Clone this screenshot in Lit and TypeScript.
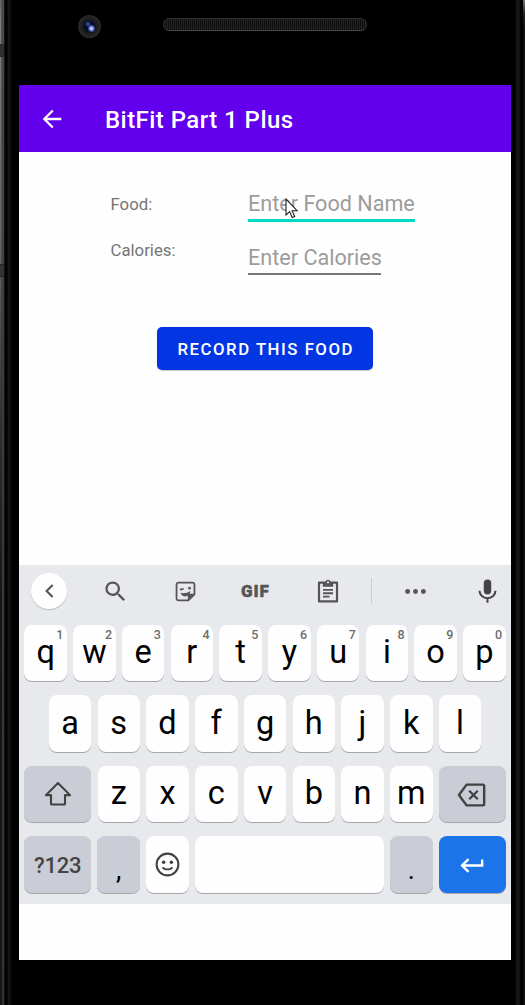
import { LitElement, html, css, svg, nothing } from "lit";
import { customElement, property } from "lit/decorators.js";

const icons = {
  back: svg`<path fill="currentColor" d="M20 11H7.8l5.6-5.6L12 4l-8 8 8 8 1.4-1.4L7.8 13H20z"/>`,
  chevron: svg`<path fill="none" stroke="currentColor" stroke-width="2" d="M15 5.700L9.200 11.500l5.800 5.800"/>`,
  search: svg`<path fill="currentColor" d="M15.5 14h-.79l-.28-.27A6.47 6.47 0 0 0 16 9.5 6.5 6.5 0 1 0 9.5 16c1.61 0 3.09-.59 4.23-1.57l.27.28v.79l5 4.99L20.49 19zm-6 0a4.5 4.5 0 1 1 0-9 4.5 4.5 0 0 1 0 9z"/>`,
  sticker: svg`<path fill="none" stroke="currentColor" stroke-width="1.700" stroke-linejoin="round" d="M5.200 3.400h13.600a1.800 1.800 0 0 1 1.800 1.800v9.600l-5.800 5.800H5.200a1.800 1.800 0 0 1-1.800-1.800V5.200a1.800 1.800 0 0 1 1.800-1.800z"/><path fill="currentColor" d="M20.800 14.200l-6.600 6.600v-4.400a2.200 2.200 0 0 1 2.200-2.200z"/><circle cx="15.900" cy="8.800" r="1.300" fill="currentColor"/><path fill="none" stroke="currentColor" stroke-width="1.700" d="M6.700 10.200l3.400-.8"/><path fill="currentColor" d="M7.200 13.200c3.200.9 6.400.3 9.500-1.700-.2 3.400-2.400 5.200-4.900 5.200-2.200 0-3.900-1.300-4.600-3.500z"/>`,
  clipboard: svg`<path fill="none" stroke="currentColor" stroke-width="2" stroke-linejoin="round" d="M3.700 4.200h16.600v17.400H3.700z"/><path fill="currentColor" d="M7.200 3.600h2.200a2.700 2.700 0 0 1 5.200 0h2.200v4.400H7.200z"/><circle cx="12" cy="4" r="1" fill="#e8e9ed"/><path stroke="currentColor" stroke-width="1.700" d="M7.400 11h9.200M7.400 14.100h9.200M7.400 17.200h6"/>`,
  more: svg`<circle cx="5" cy="12" r="2.200" fill="currentColor"/><circle cx="12" cy="12" r="2.200" fill="currentColor"/><circle cx="19" cy="12" r="2.200" fill="currentColor"/>`,
  mic: svg`<rect x="8.700" y="1.300" width="6.600" height="13.300" rx="3.300" fill="currentColor"/><path fill="none" stroke="currentColor" stroke-width="1.800" d="M4.900 11.300a7.100 6.600 0 0 0 14.200 0M12 18v4"/>`,
  shift: svg`<path fill="none" stroke="currentColor" stroke-width="1.700" stroke-linejoin="round" d="M12 3.200L2.400 12.900h4v6.800a.7.7 0 0 0 .7.700h9.800a.7.700 0 0 0 .7-.7v-6.800h4z"/>`,
  erase: svg`<path fill="none" stroke="currentColor" stroke-width="1.800" stroke-linejoin="round" d="M8.300 4.200h12.200a1 1 0 0 1 1 1v13.600a1 1 0 0 1-1 1H8.300L2.600 12z"/><path fill="none" stroke="currentColor" stroke-width="1.700" d="M10.300 8.800l6.400 6.400M16.700 8.800l-6.400 6.400"/>`,
  smile: svg`<circle cx="12" cy="12" r="9" fill="none" stroke="currentColor" stroke-width="1.700"/><circle cx="8.800" cy="10.100" r="1.450" fill="currentColor"/><circle cx="15.200" cy="10.100" r="1.450" fill="currentColor"/><path fill="none" stroke="currentColor" stroke-width="1.500" d="M8 14.200c1.600 2.500 6.400 2.500 8 0"/>`,
  enter: svg`<path fill="currentColor" d="M19 7v4H5.830l3.580-3.590L8 6l-6 6 6 6 1.410-1.410L5.830 13H21V7z"/>`,
};
type IconName = keyof typeof icons;

@customElement("ui-icon")
class UiIcon extends LitElement {
  @property() name: IconName = "back";
  static styles = css`
    :host { display: block; width: 27px; height: 27px; flex: none; }
    svg { display: block; width: 100%; height: 100%; }
  `;
  render() {
    return html`<svg viewBox="0 0 24 24">${icons[this.name]}</svg>`;
  }
}

@customElement("key-cap")
class KeyCap extends LitElement {
  @property() label = "";
  @property() hint = "";
  @property() icon = "";
  static styles = css`
    :host {
      display: flex; align-items: center; justify-content: center;
      position: relative; box-sizing: border-box; width: 42.500px; height: 56.500px; flex: none;
      border-radius: 8px; background: #fefefe; color: #000;
      box-shadow: 0 1px 0.500px #a5a7ab; font-size: 32.500px; line-height: 56px;
    }
    :host(.wide) { width: 66.875px; }
    :host(.grey) { background: #cacdd5; }
    :host(.space) { flex: 1; }
    :host(.go) { background: #1b74e8; color: #fff; }
    :host(.mode) { font-size: 22px; font-weight: 500; color: #444; }
    :host(.dim) { color: #424242; }
    .label { margin-top: -1px; }
    :host(.mode) .label { margin-top: 2.500px; letter-spacing: -0.200px; }
    :host(.punct) { font-size: 27px; }
    :host(.punct) .label { margin-top: 12px; }
    .hint {
      position: absolute; top: 2px; right: 3.500px;
      font-size: 12.500px; line-height: 16px; font-weight: 500; color: #6c6c6c;
    }
    ui-icon { width: 29px; height: 29px; }
    .shift { width: 30px; height: 30px; margin-top: 1px; }
    .erase { width: 33px; height: 32px; margin: 2px 2px 0 0; }
    .smile { margin-top: 1px; }
    .enter { margin-top: 2px; }
  `;
  render() {
    return html`
      ${this.icon ? html`<ui-icon class=${this.icon} name=${this.icon}></ui-icon>` : nothing}
      ${this.label ? html`<span class="label">${this.label}</span>` : nothing}
      ${this.hint ? html`<span class="hint">${this.hint}</span>` : nothing}
    `;
  }
}

@customElement("soft-keyboard")
class SoftKeyboard extends LitElement {
  static styles = css`
    :host { display: block; height: 339px; background: #e8e9ed; }
    .tools { display: flex; align-items: center; height: 52px; padding-left: 12px; color: #555; }
    .collapse {
      display: flex; align-items: center; justify-content: center;
      width: 36px; height: 36px; border-radius: 50%; background: #fefefe;
      box-shadow: 0 1px 1px #b9babd;
    }
    .collapse ui-icon { width: 25px; height: 25px; }
    .search { margin-left: 35px; }
    .sticker { width: 25px; height: 25px; margin-left: 43.500px; }
    .gif { width: 30px; margin-left: 43.500px; font: 900 17px/27px Roboto, sans-serif; letter-spacing: 0.900px; -webkit-text-stroke: 0.400px #555; }
    .clipboard { width: 26px; height: 26px; margin-left: 44px; }
    .rule { width: 1px; height: 26px; margin-left: 30px; background: #cbccd0; }
    .more { margin-left: 30px; }
    .mic { width: 27px; height: 27px; margin-left: 44.500px; color: #444; }
    .rows { display: flex; flex-direction: column; gap: 14px; padding: 7.700px 5.300px 0; }
    .row { display: flex; justify-content: center; gap: 6.250px; }
  `;
  keys(letters: string) {
    return [...letters].map((l) => html`<key-cap label=${l}></key-cap>`);
  }
  render() {
    return html`
      <div class="tools">
        <div class="collapse"><ui-icon name="chevron"></ui-icon></div>
        <ui-icon class="search" name="search"></ui-icon>
        <ui-icon class="sticker" name="sticker"></ui-icon>
        <span class="gif">GIF</span>
        <ui-icon class="clipboard" name="clipboard"></ui-icon>
        <span class="rule"></span>
        <ui-icon class="more" name="more"></ui-icon>
        <ui-icon class="mic" name="mic"></ui-icon>
      </div>
      <div class="rows">
        <div class="row">
          ${[..."qwertyuiop"].map((l, i) => html`<key-cap label=${l} hint=${String((i + 1) % 10)}></key-cap>`)}
        </div>
        <div class="row">${this.keys("asdfghjkl")}</div>
        <div class="row">
          <key-cap class="wide grey dim" icon="shift"></key-cap>
          ${this.keys("zxcvbnm")}
          <key-cap class="wide grey dim" icon="erase"></key-cap>
        </div>
        <div class="row">
          <key-cap class="wide grey mode" label="?123"></key-cap>
          <key-cap class="grey punct" label=","></key-cap>
          <key-cap class="dim" icon="smile"></key-cap>
          <key-cap class="space"></key-cap>
          <key-cap class="grey punct" label="."></key-cap>
          <key-cap class="wide go" icon="enter"></key-cap>
        </div>
      </div>
    `;
  }
}

@customElement("app-root")
class AppRoot extends LitElement {
  static styles = css`
    :host {
      display: grid; grid-template: 85px 875px 45px / 19px 492px 14px;
      width: 525px; height: 1005px; overflow: hidden;
      background: #000; font-family: Roboto, sans-serif;
    }
    .edge { grid-row: 1 / 4; }
    .left {
      grid-column: 1;
      background:
        linear-gradient(#222, #2e2e2e 1px, #2e2e2e 12px, #222) 0 44px / 4px 13px no-repeat,
        linear-gradient(#1a1a1a, #333 1px, #333 12px, #1a1a1a) 0 264px / 4px 13px no-repeat,
        linear-gradient(#666, #7c7c7c 20px, #666 240px, #333 420px, #161616 600px) 0 0 / 1px 100% no-repeat,
        linear-gradient(#555, #505050 240px, #2c2c2c 420px, #161616 600px) 1px 0 / 1px 100% no-repeat,
        linear-gradient(#4a4a4a, #3c3c3c 400px, #333) 2px 0 / 2px 100% no-repeat,
        linear-gradient(90deg, #222 4px, #030303 5px, #000 7px, #131313 8px, #131313 10px, #050505 11px, #000 12px);
    }
    .right {
      grid-column: 3;
      background:
        linear-gradient(#777, #222 14px, transparent 30px) 12px 0 / 2px 30px no-repeat,
        linear-gradient(90deg, #000 4px, #0d0d0d 5px, #171717 6px, #171717 8px, #060606 9px, #000 11px, #000 12px, #111 13px);
    }
    .top { grid-column: 2; grid-row: 1; display: flex; align-items: flex-start; }
    .camera {
      width: 23px; height: 23px; margin: 15px 0 0 59px; border-radius: 50%;
      background:
        radial-gradient(circle at 13.500px 13.500px, #b5c8ff 0 1px, #4c65c8 2.500px, transparent 4px),
        radial-gradient(circle at 10px 9px, #304a9c 0 1px, transparent 3px),
        radial-gradient(circle, #090c26 0 5px, #1b1b1d 7px, #292929 11px);
    }
    .speaker {
      box-sizing: border-box; width: 204px; height: 13px; margin: 18px 0 0 62px;
      border: 1.500px solid #303030; border-bottom-color: #454545; border-radius: 7px;
      background: repeating-linear-gradient(90deg, #100f0d 0 1px, #25231f 1px 2px);
    }
    .screen { grid-column: 2; grid-row: 2; display: flex; flex-direction: column; background: #fefefe; }
    .bar { display: flex; align-items: center; height: 67px; padding-left: 19px; background: #6200ee; color: #fff; }
    .bar ui-icon { width: 28px; height: 28px; }
    .title { margin: 2px 0 0 39px; font-size: 24px; font-weight: 500; line-height: 30px; letter-spacing: 0.450px; }
    .form { display: flex; flex-direction: column; flex: 1; }
    .fields { display: grid; grid-template-columns: 137px 1fr; padding: 38px 0 0 92px; }
    .names { display: flex; flex-direction: column; padding-top: 4px; margin-left: -0.500px; font-size: 16.750px; line-height: 20px; gap: 26px; color: #757575; }
    .inputs { display: flex; flex-direction: column; align-items: flex-start; gap: 22px; }
    .entry { position: relative; display: block; }
    input {
      display: block; box-sizing: border-box; height: 31px; padding: 0 0 3px; margin: 0;
      border: 0; border-bottom: 1px solid #777; outline: none; background: none;
      font: 21.600px/27px Roboto, sans-serif; color: #222;
    }
    input::placeholder { color: #9c9c9c; opacity: 1; }
    .food { width: 167px; border-bottom: 3px solid #03dac5; height: 32px; padding-bottom: 2px; }
    .calories { width: 133px; border-bottom-width: 2px; }
    .pointer { position: absolute; left: 37px; top: 8px; width: 14px; height: 21px; }
    .record {
      align-self: flex-start; margin: 51.500px 0 0 138.300px; width: 215.400px; height: 43.500px; padding: 1px 0 0 1.500px;
      border: 0; border-radius: 5px; background: #0336e3; color: #fff;
      font: 500 16.750px/20px Roboto, sans-serif; letter-spacing: 1.520px; white-space: nowrap;
      box-shadow: 0 1px 1px #ccc;
    }
    soft-keyboard { flex: none; margin-bottom: 56px; }
  `;
  render() {
    return html`
      <div class="edge left"></div>
      <div class="top">
        <div class="camera"></div>
        <div class="speaker"></div>
      </div>
      <main class="screen">
        <header class="bar">
          <ui-icon name="back"></ui-icon>
          <span class="title">BitFit Part 1 Plus</span>
        </header>
        <section class="form">
          <div class="fields">
            <div class="names"><span>Food:</span><span>Calories:</span></div>
            <div class="inputs">
              <div class="entry">
                <input class="food" placeholder="Enter Food Name" />
                <svg class="pointer" viewBox="0 0 14 21">
                  <path d="M1 1v16l3.600-3.400 2.600 5.900 2.500-1.100-2.600-5.700h5z" fill="#fff" stroke="#222" stroke-width="1.100" />
                </svg>
              </div>
              <input class="calories" placeholder="Enter Calories" />
            </div>
          </div>
          <button class="record">RECORD THIS FOOD</button>
        </section>
        <soft-keyboard></soft-keyboard>
      </main>
      <div class="edge right"></div>
    `;
  }
}
